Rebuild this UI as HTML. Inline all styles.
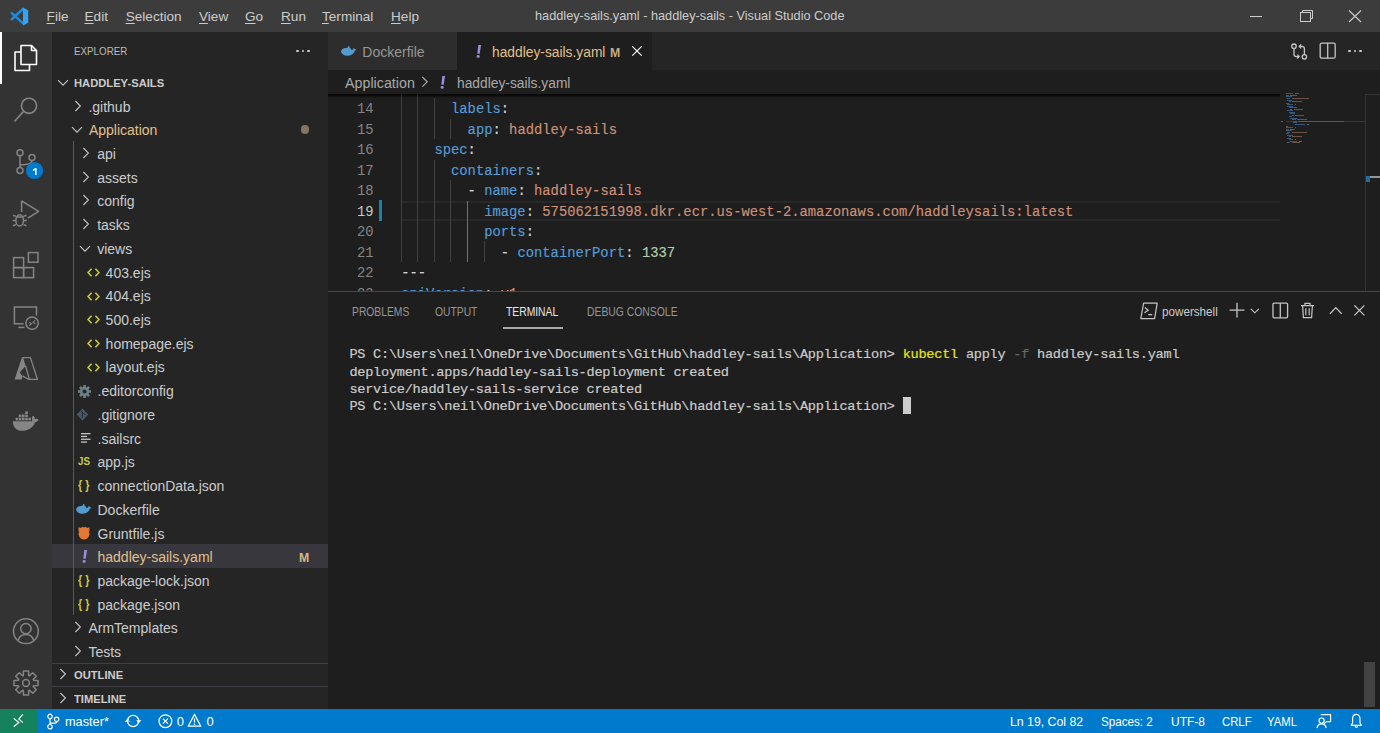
<!DOCTYPE html>
<html><head><meta charset="utf-8"><style>
html,body{margin:0;padding:0;}
body{width:1380px;height:733px;overflow:hidden;position:relative;background:#1e1e1e;font-family:'Liberation Sans', sans-serif;}
</style></head><body>
<div style="position:absolute;left:0px;top:0px;width:1380px;height:32px;background:#3c3c3c;"></div>
<div style="position:absolute;left:0px;top:32px;width:52px;height:677px;background:#333333;"></div>
<div style="position:absolute;left:52px;top:32px;width:276px;height:677px;background:#252526;"></div>
<div style="position:absolute;left:328px;top:32px;width:1052px;height:38px;background:#252526;"></div>
<div style="position:absolute;left:328px;top:70px;width:1052px;height:639px;background:#1e1e1e;"></div>
<div style="position:absolute;left:0px;top:709px;width:1380px;height:24px;background:#007acc;"></div>
<div style="position:absolute;left:0px;top:709px;width:37px;height:24px;background:#16825d;"></div>
<svg style="position:absolute;left:10px;top:7px;" width="20" height="20" viewBox="0 0 20 20"><g stroke="#1f8ad9" stroke-width="2.6" stroke-linecap="round"><path d="M13.2 1.8 L1.8 12.2"/><path d="M1.8 6.1 L13.2 16.4"/></g><path d="M13 0.8 L18.2 3.2 V15.8 L13 18.4 Z" fill="#35a6ee"/></svg>
<div style="position:absolute;left:46.60px;top:9.99px;font-family:'Liberation Sans', sans-serif;font-size:13.6px;line-height:13.6px;color:#cccccc;font-weight:400;white-space:pre;"><span style="text-decoration:underline;text-underline-offset:1.5px">F</span>ile</div>
<div style="position:absolute;left:84.50px;top:9.99px;font-family:'Liberation Sans', sans-serif;font-size:13.6px;line-height:13.6px;color:#cccccc;font-weight:400;white-space:pre;"><span style="text-decoration:underline;text-underline-offset:1.5px">E</span>dit</div>
<div style="position:absolute;left:125.70px;top:9.99px;font-family:'Liberation Sans', sans-serif;font-size:13.6px;line-height:13.6px;color:#cccccc;font-weight:400;white-space:pre;"><span style="text-decoration:underline;text-underline-offset:1.5px">S</span>election</div>
<div style="position:absolute;left:199.00px;top:9.99px;font-family:'Liberation Sans', sans-serif;font-size:13.6px;line-height:13.6px;color:#cccccc;font-weight:400;white-space:pre;"><span style="text-decoration:underline;text-underline-offset:1.5px">V</span>iew</div>
<div style="position:absolute;left:245.00px;top:9.99px;font-family:'Liberation Sans', sans-serif;font-size:13.6px;line-height:13.6px;color:#cccccc;font-weight:400;white-space:pre;"><span style="text-decoration:underline;text-underline-offset:1.5px">G</span>o</div>
<div style="position:absolute;left:281.00px;top:9.99px;font-family:'Liberation Sans', sans-serif;font-size:13.6px;line-height:13.6px;color:#cccccc;font-weight:400;white-space:pre;"><span style="text-decoration:underline;text-underline-offset:1.5px">R</span>un</div>
<div style="position:absolute;left:322.00px;top:9.99px;font-family:'Liberation Sans', sans-serif;font-size:13.6px;line-height:13.6px;color:#cccccc;font-weight:400;white-space:pre;"><span style="text-decoration:underline;text-underline-offset:1.5px">T</span>erminal</div>
<div style="position:absolute;left:391.00px;top:9.99px;font-family:'Liberation Sans', sans-serif;font-size:13.6px;line-height:13.6px;color:#cccccc;font-weight:400;white-space:pre;"><span style="text-decoration:underline;text-underline-offset:1.5px">H</span>elp</div>
<div style="position:absolute;left:535.40px;top:9.49px;font-family:'Liberation Sans', sans-serif;font-size:13.6px;line-height:13.6px;color:#cccccc;font-weight:400;white-space:pre;transform:scaleX(0.936);transform-origin:0 0;">haddley-sails.yaml - haddley-sails - Visual Studio Code</div>
<svg style="position:absolute;left:1248px;top:8px;" width="130" height="18" viewBox="0 0 130 18"><path d="M2 8.5 H14" stroke="#cccccc" stroke-width="1"/><path d="M52.5 4.5 H62.5 V12.5 M54.5 4.5 V2.5 H64.5 V10.5 H62.5" stroke="#cccccc" fill="none" stroke-width="1"/><rect x="52.5" y="4.5" width="10" height="9" stroke="#cccccc" fill="none" stroke-width="1"/><path d="M101 2.5 L113 14 M113 2.5 L101 14" stroke="#cccccc" stroke-width="1.1"/></svg>
<div style="position:absolute;left:0px;top:32px;width:2px;height:52px;background:#ffffff;"></div>
<svg style="position:absolute;left:12px;top:42px;" width="28" height="32" viewBox="0 0 28 32"><g fill="none" stroke="#ffffff" stroke-width="1.6" stroke-linejoin="round"><path d="M9 3.5 H19.5 L24.5 8.5 V22.5 H9 Z"/><path d="M19.5 3.5 V8.5 H24.5"/><path d="M9 10 H3 V28.5 H17.5 V22.5"/></g></svg>
<svg style="position:absolute;left:12px;top:92px;" width="28" height="32" viewBox="0 0 28 32"><g fill="none" stroke="#858585" stroke-width="1.6"><circle cx="17" cy="13.8" r="7.6"/><path d="M11.6 19.4 L2.5 29.5"/></g></svg>
<svg style="position:absolute;left:12px;top:144px;" width="28" height="32" viewBox="0 0 28 32"><g fill="none" stroke="#858585" stroke-width="1.5"><circle cx="8" cy="8.8" r="3"/><circle cx="20" cy="13.6" r="3"/><circle cx="8" cy="26.4" r="3"/><path d="M8 11.8 V23.4 M20 16.6 C20 20 16 20.5 8 21"/></g></svg>
<svg style="position:absolute;left:25px;top:161px;" width="19" height="19" viewBox="0 0 19 19"><circle cx="9.5" cy="9.5" r="8.6" fill="#007acc"/><path d="M7.9 8.6 L10.4 7.1 H11.6 V13.9 H10.1 V9.1 L7.9 10.2 Z" fill="#fff"/></svg>
<svg style="position:absolute;left:10px;top:198px;" width="32" height="32" viewBox="0 0 32 32"><g fill="none" stroke="#858585" stroke-width="1.5" stroke-linejoin="round"><path d="M11.6 2.8 V14 M11.6 2.8 L28.6 13.3 L17.8 20.2"/><ellipse cx="9.7" cy="22.4" rx="3.8" ry="5.6"/><path d="M6 18.9 H13.4 M3 17.2 L5.9 18.4 M16.4 17.2 L13.5 18.4 M2.6 22.6 H5.9 M13.5 22.6 H16.8 M3 27.8 L5.9 26.6 M16.4 27.8 L13.5 26.6"/></g></svg>
<svg style="position:absolute;left:12px;top:250px;" width="28" height="30" viewBox="0 0 28 30"><g fill="none" stroke="#858585" stroke-width="1.5"><rect x="1.6" y="7.6" width="10" height="10"/><rect x="1.6" y="17.6" width="10" height="10"/><rect x="11.6" y="17.6" width="10" height="10"/><rect x="16.4" y="2.6" width="9.6" height="9.6"/></g></svg>
<svg style="position:absolute;left:12px;top:302px;" width="28" height="30" viewBox="0 0 28 30"><g fill="none" stroke="#858585" stroke-width="1.5"><path d="M11.6 21.8 H2.4 V5.1 H24.5 V13.4"/><path d="M6.3 25.4 H12.6"/><circle cx="20.1" cy="21.1" r="6.2"/><path d="M17.2 20.1 L19.5 21.8 L17.2 23.5 M23.2 18.4 L21 20.2 L23.2 22.1" stroke-width="1.1"/></g></svg>
<svg style="position:absolute;left:12px;top:354px;" width="28" height="28" viewBox="0 0 28 28"><path fill="#858585" d="M9.8 3.8 C10.3 3.4 10.9 3.4 11.3 3.9 L13.6 12 L7.6 18.4 L10.8 22.2 L9.6 25.5 H2.6 Z"/><path fill="none" stroke="#858585" stroke-width="1.3" stroke-linejoin="round" d="M10.6 3.6 H18.4 L25.4 25.3 H16.8 L10.8 22.2 M13.6 12 L17.4 25.3"/></svg>
<svg style="position:absolute;left:11px;top:408px;" width="30" height="26" viewBox="0 0 30 26"><g fill="#858585"><path d="M1.8 13.2 H23 C23.8 11.5 25.4 11 27 11.8 C26.2 13.5 25 14.2 24 14.2 C22.5 19.5 17 22.8 10.8 22.8 C5 22.8 1.8 18.5 1.8 13.2 Z"/><rect x="4.6" y="9.8" width="2.6" height="2.6"/><rect x="7.8" y="9.8" width="2.6" height="2.6"/><rect x="11" y="9.8" width="2.6" height="2.6"/><rect x="14.2" y="9.8" width="2.6" height="2.6"/><rect x="17.4" y="9.8" width="2.6" height="2.6"/><rect x="7.8" y="6.6" width="2.6" height="2.6"/><rect x="11" y="6.6" width="2.6" height="2.6"/><rect x="14.2" y="6.6" width="2.6" height="2.6"/><rect x="14.2" y="3.4" width="2.6" height="2.6"/><path d="M21 13.4 L21.1 8.8 C21.6 7.4 23 7.6 23.6 9.4 L24.1 11.2 C25.3 10.6 26.7 10.8 27.6 11.7 C26.8 13.1 25.2 14 23.8 14.2 Z"/></g></svg>
<svg style="position:absolute;left:12px;top:617px;" width="28" height="30" viewBox="0 0 28 30"><g fill="none" stroke="#858585" stroke-width="1.5"><circle cx="13.9" cy="14.2" r="12.4"/><circle cx="13.9" cy="11.6" r="5.2"/><path d="M6.2 23.4 C7.3 19.6 10.3 17.6 13.9 17.6 C17.5 17.6 20.5 19.6 21.6 23.4"/></g></svg>
<svg style="position:absolute;left:12px;top:669px;" width="28" height="30" viewBox="0 0 28 30"><g fill="none" stroke="#858585" stroke-width="1.5" stroke-linejoin="round"><path d="M26.03 11.44 L26.03 16.56 L21.54 16.67 L21.22 17.44 L24.32 20.70 L20.70 24.32 L17.44 21.22 L16.67 21.54 L16.56 26.03 L11.44 26.03 L11.33 21.54 L10.56 21.22 L7.30 24.32 L3.68 20.70 L6.78 17.44 L6.46 16.67 L1.97 16.56 L1.97 11.44 L6.46 11.33 L6.78 10.56 L3.68 7.30 L7.30 3.68 L10.56 6.78 L11.33 6.46 L11.44 1.97 L16.56 1.97 L16.67 6.46 L17.44 6.78 L20.70 3.68 L24.32 7.30 L21.22 10.56 L21.54 11.33 Z"/><circle cx="14" cy="14" r="3.4"/></g></svg>
<div style="position:absolute;left:73.60px;top:46.25px;font-family:'Liberation Sans', sans-serif;font-size:11.4px;line-height:11.4px;color:#bbbbbb;font-weight:400;white-space:pre;transform:scaleX(0.86);transform-origin:0 0;">EXPLORER</div>
<div style="position:absolute;left:296.09999999999997px;top:49.7px;width:2.6px;height:2.6px;border-radius:50%;background:#cccccc"></div>
<div style="position:absolute;left:301.7px;top:49.7px;width:2.6px;height:2.6px;border-radius:50%;background:#cccccc"></div>
<div style="position:absolute;left:307.09999999999997px;top:49.7px;width:2.6px;height:2.6px;border-radius:50%;background:#cccccc"></div>
<svg style="position:absolute;left:57px;top:79.2px;" width="12" height="8" viewBox="0 0 12 8"><path d="M1 1.2 L6 6.2 L11 1.2" fill="none" stroke="#c5c5c5" stroke-width="1.1"/></svg>
<div style="position:absolute;left:73.60px;top:77.08px;font-family:'Liberation Sans', sans-serif;font-size:11.6px;line-height:11.6px;color:#cccccc;font-weight:700;white-space:pre;transform:scaleX(0.965);transform-origin:0 0;">HADDLEY-SAILS</div>
<div style="position:absolute;left:52px;top:544.4px;width:276px;height:23.7px;background:#37373d;"></div>
<div style="position:absolute;left:73px;top:141px;width:1px;height:474.3px;background:#585858;"></div>
<svg style="position:absolute;left:73.5px;top:99.60000000000001px;" width="8" height="12" viewBox="0 0 8 12"><path d="M1.4 1 L6.4 6 L1.4 11" fill="none" stroke="#c5c5c5" stroke-width="1.1"/></svg>
<div style="position:absolute;left:88.40px;top:99.55px;font-family:'Liberation Sans', sans-serif;font-size:14px;line-height:14px;color:#cccccc;font-weight:400;white-space:pre;">.github</div>
<svg style="position:absolute;left:70.5px;top:125.92px;" width="12" height="8" viewBox="0 0 12 8"><path d="M1 1.2 L6 6.2 L11 1.2" fill="none" stroke="#c5c5c5" stroke-width="1.1"/></svg>
<div style="position:absolute;left:88.90px;top:123.27px;font-family:'Liberation Sans', sans-serif;font-size:14px;line-height:14px;color:#e2c08d;font-weight:400;white-space:pre;">Application</div>
<svg style="position:absolute;left:82.3px;top:147.04px;" width="8" height="12" viewBox="0 0 8 12"><path d="M1.4 1 L6.4 6 L1.4 11" fill="none" stroke="#c5c5c5" stroke-width="1.1"/></svg>
<div style="position:absolute;left:97.20px;top:146.99px;font-family:'Liberation Sans', sans-serif;font-size:14px;line-height:14px;color:#cccccc;font-weight:400;white-space:pre;">api</div>
<svg style="position:absolute;left:82.3px;top:170.76px;" width="8" height="12" viewBox="0 0 8 12"><path d="M1.4 1 L6.4 6 L1.4 11" fill="none" stroke="#c5c5c5" stroke-width="1.1"/></svg>
<div style="position:absolute;left:97.20px;top:170.71px;font-family:'Liberation Sans', sans-serif;font-size:14px;line-height:14px;color:#cccccc;font-weight:400;white-space:pre;">assets</div>
<svg style="position:absolute;left:82.3px;top:194.48px;" width="8" height="12" viewBox="0 0 8 12"><path d="M1.4 1 L6.4 6 L1.4 11" fill="none" stroke="#c5c5c5" stroke-width="1.1"/></svg>
<div style="position:absolute;left:97.20px;top:194.43px;font-family:'Liberation Sans', sans-serif;font-size:14px;line-height:14px;color:#cccccc;font-weight:400;white-space:pre;">config</div>
<svg style="position:absolute;left:82.3px;top:218.2px;" width="8" height="12" viewBox="0 0 8 12"><path d="M1.4 1 L6.4 6 L1.4 11" fill="none" stroke="#c5c5c5" stroke-width="1.1"/></svg>
<div style="position:absolute;left:97.20px;top:218.15px;font-family:'Liberation Sans', sans-serif;font-size:14px;line-height:14px;color:#cccccc;font-weight:400;white-space:pre;">tasks</div>
<svg style="position:absolute;left:78.9px;top:244.52px;" width="12" height="8" viewBox="0 0 12 8"><path d="M1 1.2 L6 6.2 L11 1.2" fill="none" stroke="#c5c5c5" stroke-width="1.1"/></svg>
<div style="position:absolute;left:97.20px;top:241.87px;font-family:'Liberation Sans', sans-serif;font-size:14px;line-height:14px;color:#cccccc;font-weight:400;white-space:pre;">views</div>
<div style="position:absolute;left:86.8px;top:268.04px;line-height:0"><svg width="13" height="9" viewBox="0 0 13 9"><path d="M4.6 0.8 L1 4.5 L4.6 8.2 M8.4 0.8 L12 4.5 L8.4 8.2" fill="none" stroke="#cbcb41" stroke-width="1.6"/></svg></div>
<div style="position:absolute;left:105.60px;top:265.59px;font-family:'Liberation Sans', sans-serif;font-size:14px;line-height:14px;color:#cccccc;font-weight:400;white-space:pre;">403.ejs</div>
<div style="position:absolute;left:86.8px;top:291.76px;line-height:0"><svg width="13" height="9" viewBox="0 0 13 9"><path d="M4.6 0.8 L1 4.5 L4.6 8.2 M8.4 0.8 L12 4.5 L8.4 8.2" fill="none" stroke="#cbcb41" stroke-width="1.6"/></svg></div>
<div style="position:absolute;left:105.60px;top:289.31px;font-family:'Liberation Sans', sans-serif;font-size:14px;line-height:14px;color:#cccccc;font-weight:400;white-space:pre;">404.ejs</div>
<div style="position:absolute;left:86.8px;top:315.48px;line-height:0"><svg width="13" height="9" viewBox="0 0 13 9"><path d="M4.6 0.8 L1 4.5 L4.6 8.2 M8.4 0.8 L12 4.5 L8.4 8.2" fill="none" stroke="#cbcb41" stroke-width="1.6"/></svg></div>
<div style="position:absolute;left:105.60px;top:313.03px;font-family:'Liberation Sans', sans-serif;font-size:14px;line-height:14px;color:#cccccc;font-weight:400;white-space:pre;">500.ejs</div>
<div style="position:absolute;left:86.8px;top:339.20000000000005px;line-height:0"><svg width="13" height="9" viewBox="0 0 13 9"><path d="M4.6 0.8 L1 4.5 L4.6 8.2 M8.4 0.8 L12 4.5 L8.4 8.2" fill="none" stroke="#cbcb41" stroke-width="1.6"/></svg></div>
<div style="position:absolute;left:105.60px;top:336.75px;font-family:'Liberation Sans', sans-serif;font-size:14px;line-height:14px;color:#cccccc;font-weight:400;white-space:pre;">homepage.ejs</div>
<div style="position:absolute;left:86.8px;top:362.91999999999996px;line-height:0"><svg width="13" height="9" viewBox="0 0 13 9"><path d="M4.6 0.8 L1 4.5 L4.6 8.2 M8.4 0.8 L12 4.5 L8.4 8.2" fill="none" stroke="#cbcb41" stroke-width="1.6"/></svg></div>
<div style="position:absolute;left:105.60px;top:360.47px;font-family:'Liberation Sans', sans-serif;font-size:14px;line-height:14px;color:#cccccc;font-weight:400;white-space:pre;">layout.ejs</div>
<div style="position:absolute;left:77.6px;top:384.84px;line-height:0"><svg width="13" height="13" viewBox="0 0 13 13"><g fill="#6d8086"><circle cx="6.5" cy="6.5" r="4.6"/><rect x="5.2" y="0" width="2.6" height="13" transform="rotate(0 6.5 6.5)"/><rect x="5.2" y="0" width="2.6" height="13" transform="rotate(45 6.5 6.5)"/><rect x="5.2" y="0" width="2.6" height="13" transform="rotate(90 6.5 6.5)"/><rect x="5.2" y="0" width="2.6" height="13" transform="rotate(135 6.5 6.5)"/></g><circle cx="6.5" cy="6.5" r="2" fill="#252526"/></svg></div>
<div style="position:absolute;left:97.50px;top:384.19px;font-family:'Liberation Sans', sans-serif;font-size:14px;line-height:14px;color:#cccccc;font-weight:400;white-space:pre;">.editorconfig</div>
<div style="position:absolute;left:76.39999999999999px;top:407.76px;line-height:0"><svg width="13" height="13" viewBox="0 0 13 13"><path d="M6.5 0.6 L12.4 6.5 L6.5 12.4 L0.6 6.5 Z" fill="#435869"/><path d="M5.2 3.2 L8.6 6.6 M6.3 4.6 V9.8" stroke="#252526" stroke-width="0.9"/></svg></div>
<div style="position:absolute;left:97.50px;top:407.91px;font-family:'Liberation Sans', sans-serif;font-size:14px;line-height:14px;color:#cccccc;font-weight:400;white-space:pre;">.gitignore</div>
<div style="position:absolute;left:81px;top:433.28000000000003px;line-height:0"><svg width="10" height="10" viewBox="0 0 10 10"><g fill="#c5c5c5"><rect x="0" y="0" width="9.5" height="1.3"/><rect x="0" y="2.8" width="6" height="1.3"/><rect x="0" y="5.6" width="9.5" height="1.3"/><rect x="0" y="8.4" width="6" height="1.3"/></g></svg></div>
<div style="position:absolute;left:97.50px;top:431.63px;font-family:'Liberation Sans', sans-serif;font-size:14px;line-height:14px;color:#cccccc;font-weight:400;white-space:pre;">.sailsrc</div>
<div style="position:absolute;left:78.00px;top:456.93px;font-family:'Liberation Sans', sans-serif;font-size:10px;line-height:10px;color:#cbcb41;font-weight:700;white-space:pre;transform:scaleX(0.98);transform-origin:0 0;">JS</div>
<div style="position:absolute;left:97.50px;top:455.35px;font-family:'Liberation Sans', sans-serif;font-size:14px;line-height:14px;color:#cccccc;font-weight:400;white-space:pre;">app.js</div>
<div style="position:absolute;left:77.50px;top:478.96px;font-family:'Liberation Sans', sans-serif;font-size:12px;line-height:12px;color:#cbcb41;font-weight:700;white-space:pre;transform:scaleX(0.9);transform-origin:0 0;">{ }</div>
<div style="position:absolute;left:97.50px;top:479.07px;font-family:'Liberation Sans', sans-serif;font-size:14px;line-height:14px;color:#cccccc;font-weight:400;white-space:pre;">connectionData.json</div>
<div style="position:absolute;left:76.2px;top:504.24px;line-height:0"><svg width="16" height="11" viewBox="0 0 16 11"><path fill="#519bcf" d="M0 5.4 C0.3 4.2 1.5 2.8 3 2.3 L4.6 1.9 L6.6 1.7 L7.1 0.1 L8.4 0.3 L8.7 1.8 L9.7 2.5 L10.5 4.1 L12 3.6 L12.5 2 L13.7 2.8 L15.4 3.7 L13.9 4.8 C12.9 7.6 10.5 9.5 7 9.7 C3 9.9 0.6 8 0 5.4 Z"/></svg></div>
<div style="position:absolute;left:97.50px;top:502.79px;font-family:'Liberation Sans', sans-serif;font-size:14px;line-height:14px;color:#cccccc;font-weight:400;white-space:pre;">Dockerfile</div>
<div style="position:absolute;left:78.0px;top:525.5600000000001px;line-height:0"><svg width="12" height="14" viewBox="0 0 12 14"><path d="M0.6 1.2 L2.8 2 L4.3 0.7 L6 1.5 L7.7 0.7 L9.2 2 L11.4 1.2 V5 L10.8 6.5 L11.6 7.8 L11 9.8 C10.4 12.2 8.4 13.6 6 13.6 C3.6 13.6 1.6 12.2 1 9.8 L0.4 7.8 L1.2 6.5 L0.6 5 Z" fill="#e37933"/></svg></div>
<div style="position:absolute;left:97.50px;top:526.51px;font-family:'Liberation Sans', sans-serif;font-size:14px;line-height:14px;color:#cccccc;font-weight:400;white-space:pre;">Gruntfile.js</div>
<svg style="position:absolute;left:81.6px;top:550.18px;" width="6" height="13" viewBox="0 0 6 13"><path d="M2.3 0 H5.1 L3.7 8.7 H1.3 Z" fill="#9d8ad9"/><rect x="0.6" y="9.9" width="3.1" height="2.8" rx="1.3" fill="#9d8ad9"/></svg>
<div style="position:absolute;left:97.50px;top:550.23px;font-family:'Liberation Sans', sans-serif;font-size:14px;line-height:14px;color:#e2c08d;font-weight:400;white-space:pre;">haddley-sails.yaml</div>
<div style="position:absolute;left:77.50px;top:573.84px;font-family:'Liberation Sans', sans-serif;font-size:12px;line-height:12px;color:#cbcb41;font-weight:700;white-space:pre;transform:scaleX(0.9);transform-origin:0 0;">{ }</div>
<div style="position:absolute;left:97.50px;top:573.95px;font-family:'Liberation Sans', sans-serif;font-size:14px;line-height:14px;color:#cccccc;font-weight:400;white-space:pre;">package-lock.json</div>
<div style="position:absolute;left:77.50px;top:597.56px;font-family:'Liberation Sans', sans-serif;font-size:12px;line-height:12px;color:#cbcb41;font-weight:700;white-space:pre;transform:scaleX(0.9);transform-origin:0 0;">{ }</div>
<div style="position:absolute;left:97.50px;top:597.67px;font-family:'Liberation Sans', sans-serif;font-size:14px;line-height:14px;color:#cccccc;font-weight:400;white-space:pre;">package.json</div>
<svg style="position:absolute;left:73.5px;top:621.4399999999999px;" width="8" height="12" viewBox="0 0 8 12"><path d="M1.4 1 L6.4 6 L1.4 11" fill="none" stroke="#c5c5c5" stroke-width="1.1"/></svg>
<div style="position:absolute;left:88.40px;top:621.39px;font-family:'Liberation Sans', sans-serif;font-size:14px;line-height:14px;color:#cccccc;font-weight:400;white-space:pre;">ArmTemplates</div>
<svg style="position:absolute;left:73.5px;top:645.16px;" width="8" height="12" viewBox="0 0 8 12"><path d="M1.4 1 L6.4 6 L1.4 11" fill="none" stroke="#c5c5c5" stroke-width="1.1"/></svg>
<div style="position:absolute;left:88.40px;top:645.11px;font-family:'Liberation Sans', sans-serif;font-size:14px;line-height:14px;color:#cccccc;font-weight:400;white-space:pre;">Tests</div>
<div style="position:absolute;left:300.6px;top:125.4px;width:8.6px;height:8.6px;border-radius:50%;background:#857560"></div>
<div style="position:absolute;left:299.40px;top:551.11px;font-family:'Liberation Sans', sans-serif;font-size:13.2px;line-height:13.2px;color:#d6b886;font-weight:700;white-space:pre;transform:scaleX(0.93);transform-origin:0 0;">M</div>
<div style="position:absolute;left:52px;top:662.7px;width:276px;height:1px;background:#3f3f46;"></div>
<svg style="position:absolute;left:59.2px;top:668.38px;" width="8" height="12" viewBox="0 0 8 12"><path d="M1.4 1 L6.4 6 L1.4 11" fill="none" stroke="#c5c5c5" stroke-width="1.1"/></svg>
<div style="position:absolute;left:73.60px;top:669.46px;font-family:'Liberation Sans', sans-serif;font-size:11.6px;line-height:11.6px;color:#cccccc;font-weight:700;white-space:pre;transform:scaleX(0.965);transform-origin:0 0;">OUTLINE</div>
<div style="position:absolute;left:52px;top:686.4px;width:276px;height:1px;background:#3f3f46;"></div>
<svg style="position:absolute;left:59.2px;top:692.1px;" width="8" height="12" viewBox="0 0 8 12"><path d="M1.4 1 L6.4 6 L1.4 11" fill="none" stroke="#c5c5c5" stroke-width="1.1"/></svg>
<div style="position:absolute;left:73.60px;top:693.18px;font-family:'Liberation Sans', sans-serif;font-size:11.6px;line-height:11.6px;color:#cccccc;font-weight:700;white-space:pre;transform:scaleX(0.965);transform-origin:0 0;">TIMELINE</div>
<div style="position:absolute;left:328px;top:32px;width:129px;height:38px;background:#2d2d2d;"></div>
<div style="position:absolute;left:341px;top:46.4px;line-height:0"><svg width="16" height="11" viewBox="0 0 16 11"><path fill="#519bcf" d="M0 5.4 C0.3 4.2 1.5 2.8 3 2.3 L4.6 1.9 L6.6 1.7 L7.1 0.1 L8.4 0.3 L8.7 1.8 L9.7 2.5 L10.5 4.1 L12 3.6 L12.5 2 L13.7 2.8 L15.4 3.7 L13.9 4.8 C12.9 7.6 10.5 9.5 7 9.7 C3 9.9 0.6 8 0 5.4 Z"/></svg></div>
<div style="position:absolute;left:362.30px;top:44.85px;font-family:'Liberation Sans', sans-serif;font-size:14px;line-height:14px;color:#969696;font-weight:400;white-space:pre;">Dockerfile</div>
<div style="position:absolute;left:457px;top:32px;width:195px;height:38px;background:#1e1e1e;"></div>
<svg style="position:absolute;left:475.6px;top:44.6px;" width="6" height="13" viewBox="0 0 6 13"><path d="M2.3 0 H5.1 L3.7 8.7 H1.3 Z" fill="#9d8ad9"/><rect x="0.6" y="9.9" width="3.1" height="2.8" rx="1.3" fill="#9d8ad9"/></svg>
<div style="position:absolute;left:492.30px;top:44.85px;font-family:'Liberation Sans', sans-serif;font-size:14px;line-height:14px;color:#e2c08d;font-weight:400;white-space:pre;transform:scaleX(0.985);transform-origin:0 0;">haddley-sails.yaml</div>
<div style="position:absolute;left:610.40px;top:45.83px;font-family:'Liberation Sans', sans-serif;font-size:13.2px;line-height:13.2px;color:#c8aa7e;font-weight:700;white-space:pre;transform:scaleX(0.93);transform-origin:0 0;">M</div>
<svg style="position:absolute;left:631px;top:44.6px;" width="12" height="12" viewBox="0 0 12 12"><path d="M1.3 1.3 L10.7 10.7 M10.7 1.3 L1.3 10.7" stroke="#ffffff" stroke-width="1.15"/></svg>
<svg style="position:absolute;left:1289px;top:41px;" width="20" height="20" viewBox="0 0 20 20"><g fill="none" stroke="#c5c5c5" stroke-width="1.3"><circle cx="5" cy="5.2" r="2.2"/><path d="M5 7.4 V13.2 Q5 15.6 7.4 15.6 H10 M8.2 13.6 L10.2 15.6 L8.2 17.6"/><circle cx="15.4" cy="15.8" r="2.2"/><path d="M15.4 13.6 V7.8 Q15.4 5.4 13 5.4 H10.4 M12.2 3.4 L10.2 5.4 L12.2 7.4"/></g></svg>
<svg style="position:absolute;left:1319px;top:42px;" width="18" height="18" viewBox="0 0 18 18"><g fill="none" stroke="#c5c5c5" stroke-width="1.3"><rect x="1.2" y="1.2" width="15" height="15" rx="1.5"/><path d="M8.7 1.2 V16.2"/></g></svg>
<div style="position:absolute;left:1348.4px;top:49.7px;width:2.6px;height:2.6px;border-radius:50%;background:#cccccc"></div>
<div style="position:absolute;left:1353.9px;top:49.7px;width:2.6px;height:2.6px;border-radius:50%;background:#cccccc"></div>
<div style="position:absolute;left:1359.3px;top:49.7px;width:2.6px;height:2.6px;border-radius:50%;background:#cccccc"></div>
<div style="position:absolute;left:345.30px;top:75.75px;font-family:'Liberation Sans', sans-serif;font-size:14px;line-height:14px;color:#a9a9a9;font-weight:400;white-space:pre;transform:scaleX(1.02);transform-origin:0 0;">Application</div>
<svg style="position:absolute;left:420.6px;top:76.3px;" width="8" height="12" viewBox="0 0 8 12"><path d="M1.4 1 L6.2 5.8 L1.4 10.6" fill="none" stroke="#a9a9a9" stroke-width="1.2"/></svg>
<svg style="position:absolute;left:440.2px;top:76.1px;" width="6" height="13" viewBox="0 0 6 13"><path d="M2.3 0 H5.1 L3.7 8.7 H1.3 Z" fill="#9d8ad9"/><rect x="0.6" y="9.9" width="3.1" height="2.8" rx="1.3" fill="#9d8ad9"/></svg>
<div style="position:absolute;left:456.70px;top:75.75px;font-family:'Liberation Sans', sans-serif;font-size:14px;line-height:14px;color:#a9a9a9;font-weight:400;white-space:pre;transform:scaleX(0.985);transform-origin:0 0;">haddley-sails.yaml</div>
<div style="position:absolute;left:328px;top:94px;width:952px;height:4px;background:linear-gradient(#000000 0%, rgba(0,0,0,0) 100%);opacity:0.6"></div>
<div style="position:absolute;left:401px;top:200.5px;width:879px;height:2px;background:#282828;"></div>
<div style="position:absolute;left:401px;top:219.1px;width:879px;height:2px;background:#282828;"></div>
<div style="position:absolute;left:379px;top:200.2px;width:3px;height:21.2px;background:#1b81a8;"></div>
<div style="position:absolute;left:328px;top:94px;width:952px;height:197px;overflow:hidden">
<div style="position:absolute;left:72.7px;top:-16.38px;width:1px;height:20.580000000000002px;background:#404040;"></div>
<div style="position:absolute;left:89.3px;top:-16.38px;width:1px;height:20.580000000000002px;background:#404040;"></div>
<div style="position:absolute;left:72.7px;top:4.1px;width:1px;height:20.580000000000002px;background:#404040;"></div>
<div style="position:absolute;left:89.3px;top:4.1px;width:1px;height:20.580000000000002px;background:#404040;"></div>
<div style="position:absolute;left:105.89px;top:4.1px;width:1px;height:20.580000000000002px;background:#404040;"></div>
<div style="position:absolute;left:72.7px;top:24.58px;width:1px;height:20.580000000000002px;background:#404040;"></div>
<div style="position:absolute;left:89.3px;top:24.58px;width:1px;height:20.580000000000002px;background:#404040;"></div>
<div style="position:absolute;left:105.89px;top:24.58px;width:1px;height:20.580000000000002px;background:#404040;"></div>
<div style="position:absolute;left:122.49px;top:24.58px;width:1px;height:20.580000000000002px;background:#404040;"></div>
<div style="position:absolute;left:72.7px;top:45.06px;width:1px;height:20.580000000000002px;background:#404040;"></div>
<div style="position:absolute;left:89.3px;top:45.06px;width:1px;height:20.580000000000002px;background:#404040;"></div>
<div style="position:absolute;left:72.7px;top:65.54px;width:1px;height:20.580000000000002px;background:#404040;"></div>
<div style="position:absolute;left:89.3px;top:65.54px;width:1px;height:20.580000000000002px;background:#404040;"></div>
<div style="position:absolute;left:105.89px;top:65.54px;width:1px;height:20.580000000000002px;background:#404040;"></div>
<div style="position:absolute;left:72.7px;top:86.02px;width:1px;height:20.580000000000002px;background:#404040;"></div>
<div style="position:absolute;left:89.3px;top:86.02px;width:1px;height:20.580000000000002px;background:#404040;"></div>
<div style="position:absolute;left:105.89px;top:86.02px;width:1px;height:20.580000000000002px;background:#404040;"></div>
<div style="position:absolute;left:122.49px;top:86.02px;width:1px;height:20.580000000000002px;background:#404040;"></div>
<div style="position:absolute;left:72.7px;top:106.5px;width:1px;height:20.580000000000002px;background:#404040;"></div>
<div style="position:absolute;left:89.3px;top:106.5px;width:1px;height:20.580000000000002px;background:#404040;"></div>
<div style="position:absolute;left:105.89px;top:106.5px;width:1px;height:20.580000000000002px;background:#404040;"></div>
<div style="position:absolute;left:122.49px;top:106.5px;width:1px;height:20.580000000000002px;background:#404040;"></div>
<div style="position:absolute;left:139.08px;top:106.5px;width:1px;height:20.580000000000002px;background:#707070;"></div>
<div style="position:absolute;left:72.7px;top:126.98px;width:1px;height:20.580000000000002px;background:#404040;"></div>
<div style="position:absolute;left:89.3px;top:126.98px;width:1px;height:20.580000000000002px;background:#404040;"></div>
<div style="position:absolute;left:105.89px;top:126.98px;width:1px;height:20.580000000000002px;background:#404040;"></div>
<div style="position:absolute;left:122.49px;top:126.98px;width:1px;height:20.580000000000002px;background:#404040;"></div>
<div style="position:absolute;left:139.08px;top:126.98px;width:1px;height:20.580000000000002px;background:#707070;"></div>
<div style="position:absolute;left:72.7px;top:147.46px;width:1px;height:20.580000000000002px;background:#404040;"></div>
<div style="position:absolute;left:89.3px;top:147.46px;width:1px;height:20.580000000000002px;background:#404040;"></div>
<div style="position:absolute;left:105.89px;top:147.46px;width:1px;height:20.580000000000002px;background:#404040;"></div>
<div style="position:absolute;left:122.49px;top:147.46px;width:1px;height:20.580000000000002px;background:#404040;"></div>
<div style="position:absolute;left:139.08px;top:147.46px;width:1px;height:20.580000000000002px;background:#707070;"></div>
<div style="position:absolute;left:155.68px;top:147.46px;width:1px;height:20.580000000000002px;background:#404040;"></div>
<div style="position:absolute;left:29.00px;top:9.40px;width:16.60px;text-align:right;font-family:'Liberation Mono', monospace;font-size:13.83px;line-height:13.83px;color:#858585;white-space:pre">14</div>
<div style="position:absolute;left:73.20px;top:9.40px;font-family:'Liberation Mono', monospace;font-size:13.83px;line-height:13.83px;white-space:pre;-webkit-text-stroke:0.15px">      <span style="color:#569cd6">labels</span><span style="color:#d4d4d4">:</span></div>
<div style="position:absolute;left:29.00px;top:29.88px;width:16.60px;text-align:right;font-family:'Liberation Mono', monospace;font-size:13.83px;line-height:13.83px;color:#858585;white-space:pre">15</div>
<div style="position:absolute;left:73.20px;top:29.88px;font-family:'Liberation Mono', monospace;font-size:13.83px;line-height:13.83px;white-space:pre;-webkit-text-stroke:0.15px">        <span style="color:#569cd6">app</span><span style="color:#d4d4d4">: </span><span style="color:#ce9178">haddley-sails</span></div>
<div style="position:absolute;left:29.00px;top:50.36px;width:16.60px;text-align:right;font-family:'Liberation Mono', monospace;font-size:13.83px;line-height:13.83px;color:#858585;white-space:pre">16</div>
<div style="position:absolute;left:73.20px;top:50.36px;font-family:'Liberation Mono', monospace;font-size:13.83px;line-height:13.83px;white-space:pre;-webkit-text-stroke:0.15px">    <span style="color:#569cd6">spec</span><span style="color:#d4d4d4">:</span></div>
<div style="position:absolute;left:29.00px;top:70.84px;width:16.60px;text-align:right;font-family:'Liberation Mono', monospace;font-size:13.83px;line-height:13.83px;color:#858585;white-space:pre">17</div>
<div style="position:absolute;left:73.20px;top:70.84px;font-family:'Liberation Mono', monospace;font-size:13.83px;line-height:13.83px;white-space:pre;-webkit-text-stroke:0.15px">      <span style="color:#569cd6">containers</span><span style="color:#d4d4d4">:</span></div>
<div style="position:absolute;left:29.00px;top:91.32px;width:16.60px;text-align:right;font-family:'Liberation Mono', monospace;font-size:13.83px;line-height:13.83px;color:#858585;white-space:pre">18</div>
<div style="position:absolute;left:73.20px;top:91.32px;font-family:'Liberation Mono', monospace;font-size:13.83px;line-height:13.83px;white-space:pre;-webkit-text-stroke:0.15px">        <span style="color:#d4d4d4">- </span><span style="color:#569cd6">name</span><span style="color:#d4d4d4">: </span><span style="color:#ce9178">haddley-sails</span></div>
<div style="position:absolute;left:29.00px;top:111.80px;width:16.60px;text-align:right;font-family:'Liberation Mono', monospace;font-size:13.83px;line-height:13.83px;color:#c6c6c6;white-space:pre">19</div>
<div style="position:absolute;left:73.20px;top:111.80px;font-family:'Liberation Mono', monospace;font-size:13.83px;line-height:13.83px;white-space:pre;-webkit-text-stroke:0.15px">          <span style="color:#569cd6">image</span><span style="color:#d4d4d4">: </span><span style="color:#ce9178">575062151998.dkr.ecr.us-west-2.amazonaws.com/haddleysails:latest</span></div>
<div style="position:absolute;left:29.00px;top:132.28px;width:16.60px;text-align:right;font-family:'Liberation Mono', monospace;font-size:13.83px;line-height:13.83px;color:#858585;white-space:pre">20</div>
<div style="position:absolute;left:73.20px;top:132.28px;font-family:'Liberation Mono', monospace;font-size:13.83px;line-height:13.83px;white-space:pre;-webkit-text-stroke:0.15px">          <span style="color:#569cd6">ports</span><span style="color:#d4d4d4">:</span></div>
<div style="position:absolute;left:29.00px;top:152.76px;width:16.60px;text-align:right;font-family:'Liberation Mono', monospace;font-size:13.83px;line-height:13.83px;color:#858585;white-space:pre">21</div>
<div style="position:absolute;left:73.20px;top:152.76px;font-family:'Liberation Mono', monospace;font-size:13.83px;line-height:13.83px;white-space:pre;-webkit-text-stroke:0.15px">            <span style="color:#d4d4d4">- </span><span style="color:#569cd6">containerPort</span><span style="color:#d4d4d4">: </span><span style="color:#b5cea8">1337</span></div>
<div style="position:absolute;left:29.00px;top:173.24px;width:16.60px;text-align:right;font-family:'Liberation Mono', monospace;font-size:13.83px;line-height:13.83px;color:#858585;white-space:pre">22</div>
<div style="position:absolute;left:73.20px;top:173.24px;font-family:'Liberation Mono', monospace;font-size:13.83px;line-height:13.83px;white-space:pre;-webkit-text-stroke:0.15px"><span style="color:#d4d4d4">---</span></div>
<div style="position:absolute;left:29.00px;top:193.72px;width:16.60px;text-align:right;font-family:'Liberation Mono', monospace;font-size:13.83px;line-height:13.83px;color:#858585;white-space:pre">23</div>
<div style="position:absolute;left:73.20px;top:193.72px;font-family:'Liberation Mono', monospace;font-size:13.83px;line-height:13.83px;white-space:pre;-webkit-text-stroke:0.15px"><span style="color:#569cd6">apiVersion</span><span style="color:#d4d4d4">: </span><span style="color:#ce9178">v1</span></div>
</div>
<div style="position:absolute;left:328px;top:94px;width:952px;height:4px;background:linear-gradient(rgba(0,0,0,0.6), rgba(0,0,0,0))"></div>
<div style="position:absolute;left:1286px;top:120.74000000000001px;width:79px;height:1.4px;background:#243a58;"></div>
<div style="position:absolute;left:1281.4px;top:120.54px;width:1.9px;height:1.9px;background:#1b81a8;border-radius:50%"></div>
<div style="position:absolute;left:1286.0px;top:93.4px;width:7.1px;height:0.9px;background:#34597c;"></div>
<div style="position:absolute;left:1294.52px;top:93.4px;width:4.97px;height:0.9px;background:#6b5244;"></div>
<div style="position:absolute;left:1286.0px;top:94.93px;width:2.84px;height:0.9px;background:#34597c;"></div>
<div style="position:absolute;left:1290.26px;top:94.93px;width:7.1px;height:0.9px;background:#6b5244;"></div>
<div style="position:absolute;left:1286.0px;top:96.46px;width:5.68px;height:0.9px;background:#34597c;"></div>
<div style="position:absolute;left:1287.42px;top:97.99px;width:2.84px;height:0.9px;background:#34597c;"></div>
<div style="position:absolute;left:1291.68px;top:97.99px;width:17.04px;height:0.9px;background:#6b5244;"></div>
<div style="position:absolute;left:1287.42px;top:99.52px;width:4.26px;height:0.9px;background:#34597c;"></div>
<div style="position:absolute;left:1288.84px;top:101.05px;width:2.13px;height:0.9px;background:#34597c;"></div>
<div style="position:absolute;left:1292.39px;top:101.05px;width:9.23px;height:0.9px;background:#6b5244;"></div>
<div style="position:absolute;left:1286.0px;top:102.58px;width:2.84px;height:0.9px;background:#34597c;"></div>
<div style="position:absolute;left:1287.42px;top:104.11px;width:5.68px;height:0.9px;background:#34597c;"></div>
<div style="position:absolute;left:1294.52px;top:104.11px;width:0.71px;height:0.9px;background:#5d6658;"></div>
<div style="position:absolute;left:1287.42px;top:105.64px;width:5.68px;height:0.9px;background:#34597c;"></div>
<div style="position:absolute;left:1288.84px;top:107.17px;width:7.81px;height:0.9px;background:#34597c;"></div>
<div style="position:absolute;left:1290.26px;top:108.7px;width:2.13px;height:0.9px;background:#34597c;"></div>
<div style="position:absolute;left:1293.81px;top:108.7px;width:9.23px;height:0.9px;background:#6b5244;"></div>
<div style="position:absolute;left:1287.42px;top:110.23px;width:5.68px;height:0.9px;background:#34597c;"></div>
<div style="position:absolute;left:1288.84px;top:111.76px;width:5.68px;height:0.9px;background:#34597c;"></div>
<div style="position:absolute;left:1290.26px;top:113.29px;width:4.26px;height:0.9px;background:#34597c;"></div>
<div style="position:absolute;left:1291.68px;top:114.82px;width:2.13px;height:0.9px;background:#34597c;"></div>
<div style="position:absolute;left:1295.23px;top:114.82px;width:9.23px;height:0.9px;background:#6b5244;"></div>
<div style="position:absolute;left:1288.84px;top:116.35px;width:2.84px;height:0.9px;background:#34597c;"></div>
<div style="position:absolute;left:1290.26px;top:117.88px;width:7.1px;height:0.9px;background:#34597c;"></div>
<div style="position:absolute;left:1291.68px;top:119.41px;width:0.71px;height:0.9px;background:#5a5a5a;"></div>
<div style="position:absolute;left:1293.1px;top:119.41px;width:2.84px;height:0.9px;background:#34597c;"></div>
<div style="position:absolute;left:1297.36px;top:119.41px;width:9.23px;height:0.9px;background:#6b5244;"></div>
<div style="position:absolute;left:1293.1px;top:120.94px;width:3.55px;height:0.9px;background:#34597c;"></div>
<div style="position:absolute;left:1298.07px;top:120.94px;width:45.44px;height:0.9px;background:#6b5244;"></div>
<div style="position:absolute;left:1293.1px;top:122.47px;width:3.55px;height:0.9px;background:#34597c;"></div>
<div style="position:absolute;left:1294.52px;top:124.0px;width:0.71px;height:0.9px;background:#5a5a5a;"></div>
<div style="position:absolute;left:1295.94px;top:124.0px;width:9.23px;height:0.9px;background:#34597c;"></div>
<div style="position:absolute;left:1306.59px;top:124.0px;width:2.84px;height:0.9px;background:#5d6658;"></div>
<div style="position:absolute;left:1286.0px;top:125.53px;width:2.13px;height:0.9px;background:#5a5a5a;"></div>
<div style="position:absolute;left:1286.0px;top:127.06px;width:7.1px;height:0.9px;background:#34597c;"></div>
<div style="position:absolute;left:1294.52px;top:127.06px;width:1.42px;height:0.9px;background:#6b5244;"></div>
<div style="position:absolute;left:1286.0px;top:128.59px;width:2.84px;height:0.9px;background:#34597c;"></div>
<div style="position:absolute;left:1290.26px;top:128.59px;width:4.97px;height:0.9px;background:#6b5244;"></div>
<div style="position:absolute;left:1286.0px;top:130.12px;width:5.68px;height:0.9px;background:#34597c;"></div>
<div style="position:absolute;left:1287.42px;top:131.65px;width:2.84px;height:0.9px;background:#34597c;"></div>
<div style="position:absolute;left:1291.68px;top:131.65px;width:14.91px;height:0.9px;background:#6b5244;"></div>
<div style="position:absolute;left:1286.0px;top:133.18px;width:2.84px;height:0.9px;background:#34597c;"></div>
<div style="position:absolute;left:1287.42px;top:134.71px;width:5.68px;height:0.9px;background:#34597c;"></div>
<div style="position:absolute;left:1288.84px;top:136.24px;width:2.13px;height:0.9px;background:#34597c;"></div>
<div style="position:absolute;left:1292.39px;top:136.24px;width:9.23px;height:0.9px;background:#6b5244;"></div>
<div style="position:absolute;left:1287.42px;top:137.77px;width:3.55px;height:0.9px;background:#34597c;"></div>
<div style="position:absolute;left:1288.84px;top:139.3px;width:0.71px;height:0.9px;background:#5a5a5a;"></div>
<div style="position:absolute;left:1290.26px;top:139.3px;width:2.84px;height:0.9px;background:#34597c;"></div>
<div style="position:absolute;left:1294.52px;top:139.3px;width:1.42px;height:0.9px;background:#5d6658;"></div>
<div style="position:absolute;left:1290.26px;top:140.83px;width:7.1px;height:0.9px;background:#34597c;"></div>
<div style="position:absolute;left:1298.78px;top:140.83px;width:2.84px;height:0.9px;background:#5d6658;"></div>
<div style="position:absolute;left:1287.42px;top:142.36px;width:2.84px;height:0.9px;background:#34597c;"></div>
<div style="position:absolute;left:1291.68px;top:142.36px;width:8.52px;height:0.9px;background:#6b5244;"></div>
<div style="position:absolute;left:1365px;top:94px;width:1px;height:197px;background:#343434;"></div>
<div style="position:absolute;left:1365px;top:94px;width:15px;height:1px;background:#343434;"></div>
<div style="position:absolute;left:1366px;top:176px;width:14px;height:2px;background:#969696;"></div>
<div style="position:absolute;left:1365.6px;top:176.4px;width:4.4px;height:5.5px;background:#1f6f98;"></div>
<div style="position:absolute;left:328px;top:291px;width:1052px;height:418px;background:#1e1e1e;"></div>
<div style="position:absolute;left:328px;top:291px;width:1052px;height:1px;background:#474747;"></div>
<div style="position:absolute;left:351.80px;top:305.94px;font-family:'Liberation Sans', sans-serif;font-size:12px;line-height:12px;color:#969696;font-weight:400;white-space:pre;transform:scaleX(0.86);transform-origin:0 0;">PROBLEMS</div>
<div style="position:absolute;left:435.20px;top:305.94px;font-family:'Liberation Sans', sans-serif;font-size:12px;line-height:12px;color:#969696;font-weight:400;white-space:pre;transform:scaleX(0.86);transform-origin:0 0;">OUTPUT</div>
<div style="position:absolute;left:506.00px;top:305.94px;font-family:'Liberation Sans', sans-serif;font-size:12px;line-height:12px;color:#e7e7e7;font-weight:400;white-space:pre;transform:scaleX(0.86);transform-origin:0 0;">TERMINAL</div>
<div style="position:absolute;left:503px;top:327px;width:60px;height:1.6px;background:#a8a8a8;"></div>
<div style="position:absolute;left:587.10px;top:305.94px;font-family:'Liberation Sans', sans-serif;font-size:12px;line-height:12px;color:#969696;font-weight:400;white-space:pre;transform:scaleX(0.865);transform-origin:0 0;">DEBUG CONSOLE</div>
<svg style="position:absolute;left:1139px;top:302px;" width="20" height="18" viewBox="0 0 20 18"><path d="M4.6 1.2 H18.2 L15.6 16.6 H1.8 Z" fill="none" stroke="#c5c5c5" stroke-width="1.2" stroke-linejoin="round"/><path d="M5.8 5.5 L9.2 8.2 L5.4 10.8 M9.2 12.6 H13.2" fill="none" stroke="#c5c5c5" stroke-width="1.2"/></svg>
<div style="position:absolute;left:1162.20px;top:305.43px;font-family:'Liberation Sans', sans-serif;font-size:13.2px;line-height:13.2px;color:#cccccc;font-weight:400;white-space:pre;transform:scaleX(0.885);transform-origin:0 0;">powershell</div>
<svg style="position:absolute;left:1229px;top:302px;" width="16" height="16" viewBox="0 0 16 16"><path d="M8 0.8 V15.4 M0.6 8.1 H15.4" stroke="#c5c5c5" stroke-width="1.3"/></svg>
<svg style="position:absolute;left:1250px;top:308px;" width="10" height="6" viewBox="0 0 10 6"><path d="M0.8 0.8 L4.8 4.8 L8.8 0.8" fill="none" stroke="#c5c5c5" stroke-width="1.1"/></svg>
<svg style="position:absolute;left:1272px;top:302px;" width="17" height="17" viewBox="0 0 17 17"><g fill="none" stroke="#c5c5c5" stroke-width="1.3"><rect x="1" y="1.2" width="14.6" height="14.6" rx="1.2"/><path d="M8.3 1.2 V15.8"/></g></svg>
<svg style="position:absolute;left:1300px;top:302px;" width="15" height="17" viewBox="0 0 15 17"><g fill="none" stroke="#c5c5c5" stroke-width="1.2"><path d="M1 3.6 H14 M5 3.6 V1.4 H10 V3.6 M2.6 3.6 L3.4 15.6 H11.6 L12.4 3.6 M5.8 6.2 V13.2 M9.2 6.2 V13.2"/></g></svg>
<svg style="position:absolute;left:1329px;top:306px;" width="14" height="9" viewBox="0 0 14 9"><path d="M1 7.8 L6.8 1.6 L12.6 7.8" fill="none" stroke="#c5c5c5" stroke-width="1.3"/></svg>
<svg style="position:absolute;left:1353px;top:304px;" width="13" height="13" viewBox="0 0 13 13"><path d="M1.4 1.4 L11.4 11.4 M11.4 1.4 L1.4 11.4" stroke="#c5c5c5" stroke-width="1.3"/></svg>
<div style="position:absolute;left:349.40px;top:348.48px;font-family:'Liberation Mono', monospace;font-size:13.6px;line-height:13.6px;color:#cccccc;font-weight:400;white-space:pre;letter-spacing:-0.254px;-webkit-text-stroke:0.2px;">PS C:\Users\neil\OneDrive\Documents\GitHub\haddley-sails\Application&gt; <span style="color:#e5e510">kubectl</span> apply <span style="color:#666666">-f</span> haddley-sails.yaml</div>
<div style="position:absolute;left:349.40px;top:365.58px;font-family:'Liberation Mono', monospace;font-size:13.6px;line-height:13.6px;color:#cccccc;font-weight:400;white-space:pre;letter-spacing:-0.254px;-webkit-text-stroke:0.2px;">deployment.apps/haddley-sails-deployment created</div>
<div style="position:absolute;left:349.40px;top:382.68px;font-family:'Liberation Mono', monospace;font-size:13.6px;line-height:13.6px;color:#cccccc;font-weight:400;white-space:pre;letter-spacing:-0.254px;-webkit-text-stroke:0.2px;">service/haddley-sails-service created</div>
<div style="position:absolute;left:349.40px;top:399.78px;font-family:'Liberation Mono', monospace;font-size:13.6px;line-height:13.6px;color:#cccccc;font-weight:400;white-space:pre;letter-spacing:-0.254px;-webkit-text-stroke:0.2px;">PS C:\Users\neil\OneDrive\Documents\GitHub\haddley-sails\Application&gt; </div>
<div style="position:absolute;left:902.8px;top:396.8px;width:8.1px;height:17.1px;background:#cccccc;"></div>
<div style="position:absolute;left:1364px;top:662px;width:11.3px;height:45px;background:#424242;"></div>
<svg style="position:absolute;left:12px;top:713px;" width="14" height="16" viewBox="0 0 14 16"><path d="M1.7 5.4 L6.8 9.5 L1.7 13.8 M10.8 1.3 L6.8 5.9 L10.8 9.7" fill="none" stroke="#ffffff" stroke-width="1.15"/></svg>
<svg style="position:absolute;left:45.7px;top:712.6px;" width="16" height="17" viewBox="0 0 16 17"><g fill="none" stroke="#ffffff" stroke-width="1.2"><circle cx="4" cy="3.4" r="2.2"/><circle cx="10.6" cy="6.3" r="2.2"/><circle cx="4" cy="13.7" r="2.2"/><path d="M4 5.6 V11.5 M10.6 8.5 V9.6 L9.2 10.1 H4.4"/></g></svg>
<div style="position:absolute;left:64.70px;top:715.30px;font-family:'Liberation Sans', sans-serif;font-size:13px;line-height:13px;color:#ffffff;font-weight:400;white-space:pre;transform:scaleX(0.98);transform-origin:0 0;">master*</div>
<svg style="position:absolute;left:124px;top:712px;" width="18" height="18" viewBox="0 0 18 18"><g fill="none" stroke="#ffffff" stroke-width="1.25"><circle cx="9.1" cy="9" r="5.6"/></g><path d="M11.6 8.2 L17.4 8.2 L14.5 11.6 Z M0.8 9.8 L6.6 9.8 L3.7 6.4 Z" fill="#ffffff"/><path d="M11.9 9.2 L13.2 9.2 M4.6 8.8 L5.8 8.8" stroke="#007acc" stroke-width="1.4"/></svg>
<svg style="position:absolute;left:157px;top:712.8px;" width="17" height="17" viewBox="0 0 17 17"><g fill="none" stroke="#ffffff" stroke-width="1.2"><circle cx="8.4" cy="8.2" r="6.4"/><path d="M5.9 5.7 L10.9 10.7 M10.9 5.7 L5.9 10.7"/></g></svg>
<div style="position:absolute;left:176.80px;top:715.30px;font-family:'Liberation Sans', sans-serif;font-size:13px;line-height:13px;color:#ffffff;font-weight:400;white-space:pre;">0</div>
<svg style="position:absolute;left:187px;top:713.2px;" width="16" height="16" viewBox="0 0 16 16"><g fill="none" stroke="#ffffff" stroke-width="1.2" stroke-linejoin="round"><path d="M7.5 1.4 L13.8 13.2 H1.2 Z"/><path d="M7.5 5.4 V9.4 M7.5 10.6 V12"/></g></svg>
<div style="position:absolute;left:206.60px;top:715.30px;font-family:'Liberation Sans', sans-serif;font-size:13px;line-height:13px;color:#ffffff;font-weight:400;white-space:pre;">0</div>
<div style="position:absolute;left:1009.60px;top:715.30px;font-family:'Liberation Sans', sans-serif;font-size:13px;line-height:13px;color:#ffffff;font-weight:400;white-space:pre;transform:scaleX(0.945);transform-origin:0 0;">Ln 19, Col 82</div>
<div style="position:absolute;left:1100.50px;top:715.30px;font-family:'Liberation Sans', sans-serif;font-size:13px;line-height:13px;color:#ffffff;font-weight:400;white-space:pre;transform:scaleX(0.896);transform-origin:0 0;">Spaces: 2</div>
<div style="position:absolute;left:1170.80px;top:715.30px;font-family:'Liberation Sans', sans-serif;font-size:13px;line-height:13px;color:#ffffff;font-weight:400;white-space:pre;transform:scaleX(0.92);transform-origin:0 0;">UTF-8</div>
<div style="position:absolute;left:1221.80px;top:715.30px;font-family:'Liberation Sans', sans-serif;font-size:13px;line-height:13px;color:#ffffff;font-weight:400;white-space:pre;transform:scaleX(0.87);transform-origin:0 0;">CRLF</div>
<div style="position:absolute;left:1267.20px;top:715.30px;font-family:'Liberation Sans', sans-serif;font-size:13px;line-height:13px;color:#ffffff;font-weight:400;white-space:pre;transform:scaleX(0.87);transform-origin:0 0;">YAML</div>
<svg style="position:absolute;left:1315px;top:712px;" width="18" height="17" viewBox="0 0 18 17"><g fill="none" stroke="#ffffff" stroke-width="1.15" stroke-linejoin="round"><path d="M5.8 2.6 H15.6 V9.6 H11.4 L9.2 11.6"/><circle cx="6.6" cy="8.6" r="2.6"/><path d="M2 16.2 C2.4 13.2 4.2 11.9 6.6 11.9 C9 11.9 10.8 13.2 11.2 16.2"/></g></svg>
<svg style="position:absolute;left:1348px;top:711px;" width="16" height="18" viewBox="0 0 16 18"><g fill="none" stroke="#ffffff" stroke-width="1.15" stroke-linejoin="round"><path d="M8.3 3.4 C5.6 3.4 4.6 5.6 4.6 7.6 V12 L3.2 14.3 H13.4 L12 12 V7.6 C12 5.6 11 3.4 8.3 3.4 Z"/><path d="M7 15.4 C7.2 16.6 9.4 16.6 9.6 15.4"/></g></svg>
</body></html>
